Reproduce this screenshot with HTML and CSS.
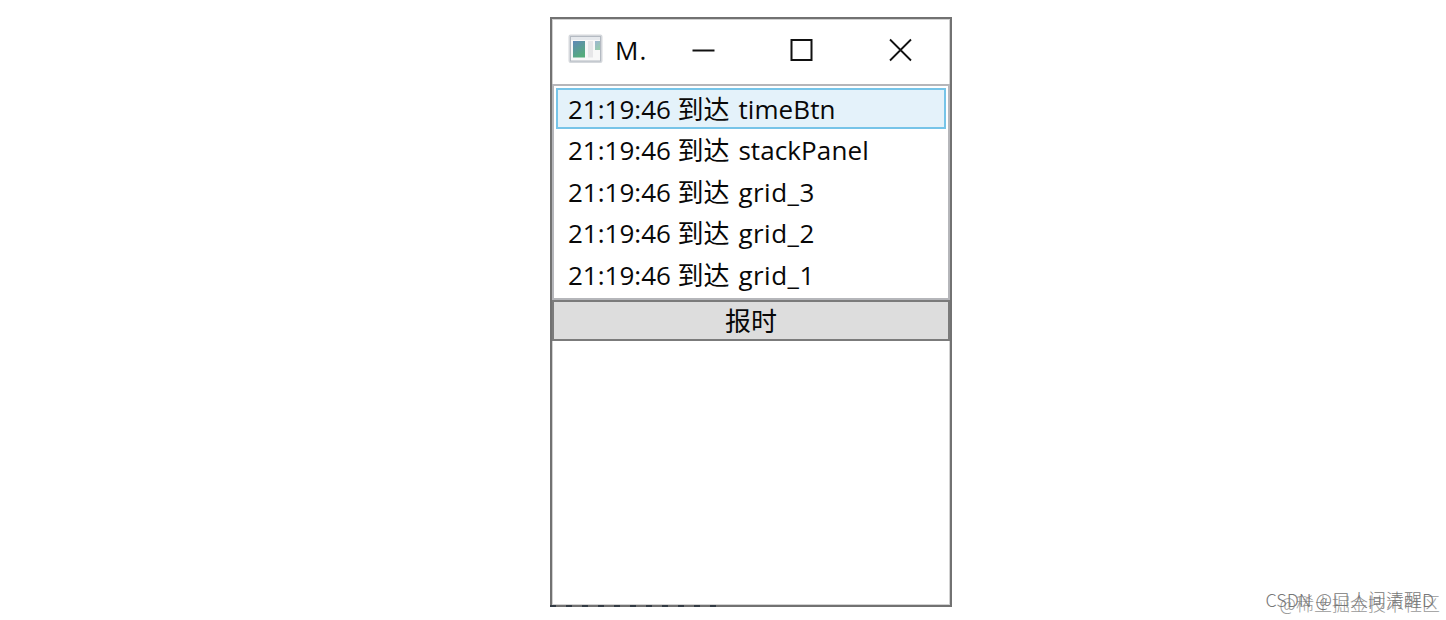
FILE: index.html
```
<!DOCTYPE html>
<html lang="zh-CN">
<head>
  <meta charset="UTF-8" />
  <title>MainWindow</title>
  <link rel="stylesheet" href="styles.css">
</head>
<body>

  <div class="window">
    <div class="title-bar">
      <svg class="app-icon" width="36" height="30" viewBox="0 0 36 30">
        <defs>
          <linearGradient id="pane" x1="0" y1="0" x2="0.5" y2="1">
            <stop offset="0" stop-color="#6088b8" />
            <stop offset="1" stop-color="#55ac7c" />
          </linearGradient>
        </defs>
        <rect x="1.5" y="1.5" width="32" height="26.5" rx="1" fill="#f8f8f8" stroke="#d5d8dc" stroke-width="2" />
        <rect x="2.5" y="2.5" width="30" height="24.5" fill="none" stroke="#b4bac2" />
        <path d="M3 4.5H32" stroke="#e6e9ed" stroke-width="3" />
        <rect x="5" y="7" width="12" height="16.5" fill="url(#pane)" />
        <rect x="20" y="7" width="5" height="16.5" fill="#e6e6e8" />
        <rect x="27" y="7" width="5" height="9" fill="url(#pane)" opacity="0.6" />
      </svg>
      <span class="title">M.</span>
      <div class="controls">
        <svg width="24" height="24" viewBox="0 0 24 24"><path d="M1.5 12.5H23.5" /></svg>
        <svg width="24" height="24" viewBox="0 0 24 24"><rect x="1.5" y="2" width="20" height="20" /></svg>
        <svg class="close" width="24" height="24" viewBox="0 0 24 24"><path d="M1 1.5L22 22.5M22 1.5L1 22.5" /></svg>
      </div>
    </div>

    <ul class="list">
      <li class="selected">21:19:46 到达 <span>timeBtn</span></li>
      <li>21:19:46 到达 <span>stackPanel</span></li>
      <li>21:19:46 到达 <span class="grid-name">grid_3</span></li>
      <li>21:19:46 到达 <span class="grid-name">grid_2</span></li>
      <li>21:19:46 到达 <span class="grid-name">grid_1</span></li>
    </ul>
    <button class="time-btn">报时</button>
  </div>

  <div class="watermark site">@稀土掘金技术社区</div>
  <div class="watermark author">CSDN @口人间清醒D</div>

</body>
</html>
```

FILE: styles.css
```
* {
  box-sizing: border-box;
}

body {
  position: relative;
  width: 1446px;
  height: 620px;
  margin: 0;
  padding: 17px 0 0 550px;
  overflow: hidden;
  background: white;
  color: #080808;
  font-family: "Open Sans", "Noto Sans CJK SC", sans-serif;
  font-size: 26px;
}

.window {
  position: relative;
  width: 402px;
  height: 590px;
  border: 2px solid #727272;
  box-shadow: inset 0 0 0 1px #d2d2d2;
}

/* desktop showing through the window edge */
.window::after {
  content: "";
  position: absolute;
  left: -2px;
  bottom: -2px;
  width: 168px;
  height: 2px;
  background: repeating-linear-gradient(90deg, #333b44 0 6px, #727272 6px 16px);
}

.title-bar {
  display: flex;
  align-items: center;
  height: 65px;
  padding-left: 16px;
  padding-bottom: 4px;
}

.app-icon {
  margin-bottom: 1px;
}

.title {
  width: 34px;
  margin-left: 11px;
  line-height: 36px;
  letter-spacing: 1px;
}

.controls {
  display: flex;
  width: 222px;
  margin-left: 42px;
  justify-content: space-between;
}

.controls svg {
  fill: none;
  stroke: #111;
  stroke-width: 2;
}

.controls .close {
  stroke-width: 1.8;
}

.list {
  height: 216px;
  margin: 0;
  padding: 2px;
  border: 2px solid #b5b6ba;
  list-style: none;
}

.list li {
  height: 41.7px;
  padding-left: 12px;
  line-height: 43px;
  white-space: nowrap;
}

.list span {
  margin-left: 2px;
  letter-spacing: 0.1px;
}

.list .grid-name {
  letter-spacing: 0.5px;
}

.list .selected {
  height: 41px;
  padding-left: 10px;
  border: 2px solid #76c4e8;
  background: #e4f2fa;
  line-height: 38px;
}

.time-btn {
  display: block;
  width: 100%;
  height: 41px;
  padding: 0;
  border: 2px solid #7b7b7b;
  background: #ddd;
  color: #080808;
  font: inherit;
  line-height: 36px;
}

.watermark {
  position: absolute;
  white-space: nowrap;
  font-family: "Noto Sans CJK SC", sans-serif;
  font-weight: 300;
  line-height: 24px;
}

.site {
  right: 6px;
  bottom: 5px;
  color: #999;
  font-size: 18px;
}

.author {
  right: 12px;
  bottom: 9px;
  color: #777;
  font-size: 18px;
}
```
